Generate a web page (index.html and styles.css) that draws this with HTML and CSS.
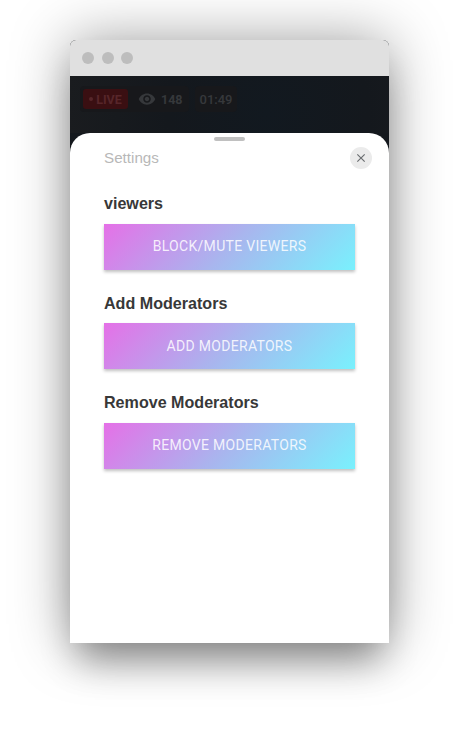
FILE: index.html
```html
<!DOCTYPE html>
<html lang="en">
<head>
<meta charset="utf-8">
<title>Settings</title>
<link rel="stylesheet" href="styles.css">
</head>
<body>
<div class="phone">
  <div class="chrome">
    <span class="dot"></span><span class="dot"></span><span class="dot"></span>
  </div>
  <div class="stage">
    <div class="hud">
      <div class="pill">
        <span class="live"><span class="live-dot"></span>LIVE</span>
        <svg class="eye" viewBox="0 0 24 24" width="18" height="18"><path fill="#36383b" d="M12 4.5C7 4.5 2.73 7.61 1 12c1.73 4.39 6 7.5 11 7.5s9.27-3.11 11-7.5c-1.73-4.39-6-7.5-11-7.5zM12 17c-2.76 0-5-2.24-5-5s2.24-5 5-5 5 2.24 5 5-2.24 5-5 5zm0-8c-1.66 0-3 1.34-3 3s1.34 3 3 3 3-1.34 3-3-1.34-3-3-3z"/></svg>
        <span class="count">148</span>
      </div>
      <div class="pill time">01:49</div>
    </div>
  </div>
  <div class="sheet">
    <span class="handle"></span>
    <header class="sheet-head">
      <span class="sheet-title">Settings</span>
      <button class="close" aria-label="Close">
        <svg viewBox="0 0 24 24" width="14" height="14"><path fill="#6a6d70" d="M19 6.41 17.59 5 12 10.59 6.41 5 5 6.41 10.59 12 5 17.59 6.41 19 12 13.41 17.59 19 19 17.59 13.41 12z"/></svg>
      </button>
    </header>
    <section class="group">
      <h2>viewers</h2>
      <button class="grad">BLOCK/MUTE VIEWERS</button>
    </section>
    <section class="group">
      <h2>Add Moderators</h2>
      <button class="grad">ADD MODERATORS</button>
    </section>
    <section class="group">
      <h2>Remove Moderators</h2>
      <button class="grad">REMOVE MODERATORS</button>
    </section>
  </div>
</div>
</body>
</html>
```
FILE: styles.css
```css
* { box-sizing: border-box; }
html, body { margin: 0; height: 100%; }
body {
  background: #fff;
  font-family: "Liberation Sans", Arial, sans-serif;
  padding: 40px 70px 0 70px;
  overflow: hidden;
}
.phone {
  width: 318.5px;
  height: 603px;
  position: relative;
  border-radius: 6px 6px 0 0;
  box-shadow: 0 0 58px rgba(0,0,0,.38), 0 26px 34px -8px rgba(0,0,0,.32);
  display: flex;
  flex-direction: column;
  background: #14181d;
}
.chrome {
  height: 36px;
  background: #e0e0e0;
  border-radius: 6px 6px 0 0;
  display: flex;
  align-items: center;
  gap: 7.5px;
  padding-left: 12px;
  flex: none;
}
.dot { width: 12px; height: 12px; border-radius: 50%; background: #bdbdbd; }
.stage {
  height: 57px;
  flex: none;
  background: radial-gradient(circle at 62% 65%, #121920 0%, #14181d 50%, #1a1c1f 100%);
  padding: 10px;
}
.hud { display: flex; gap: 6px; }
.pill {
  height: 26px;
  width: 109px;
  border-radius: 4px;
  background: #17181b;
  display: flex;
  align-items: center;
  padding: 0 3px;
  font-family: Roboto, sans-serif;
  font-size: 12.5px;
  font-weight: 700;
  color: #36383b;
}
.live {
  height: 20px;
  width: 45px;
  background: #3a0f12;
  color: #57262a;
  border-radius: 3px;
  display: flex;
  align-items: center;
  justify-content: center;
  gap: 3px;
}
.live-dot { width: 4px; height: 4px; border-radius: 50%; background: #57262a; }
.eye { margin-left: 10px; }
.count { margin-left: 5px; }
.pill.time { width: 42px; padding: 0; justify-content: center; font-weight: 500; font-size: 13px; }
.sheet {
  flex: 1;
  background: #fff;
  border-radius: 20px 20px 0 0;
  position: relative;
  padding: 0 33.5px 0 34px;
}
.handle {
  position: absolute;
  top: 4px;
  left: 144px;
  width: 31px;
  height: 4px;
  border-radius: 2px;
  background: #c0c0c0;
}
.sheet-head {
  display: flex;
  justify-content: space-between;
  align-items: center;
  height: 50px;
  margin-right: -17px;
}
.sheet-title { font-size: 15.2px; color: #b8b8b8; padding-bottom: 2px; }
.close {
  width: 22px;
  height: 22px;
  border: 0;
  padding: 0;
  border-radius: 50%;
  background: #ebebeb;
  display: flex;
  align-items: center;
  justify-content: center;
}
.group { margin-bottom: 22.5px; }
.group h2 {
  margin: 0;
  font-size: 16.1px;
  line-height: 18px;
  font-weight: bold;
  color: #383838;
  height: 31px;
  padding-top: 1.4px;
}
.sheet-head + .group { margin-top: 9.8px; }
.grad {
  display: block;
  width: 251px;
  height: 46px;
  border: 0;
  padding: 0 0 1px;
  font-family: Roboto, sans-serif;
  font-size: 14px;
  letter-spacing: .3px;
  color: rgba(255,255,255,.85);
  background: linear-gradient(135deg, #e570e7 0%, #a9b5ee 50%, #79f1fd 100%);
  box-shadow: 0 2px 3px rgba(0,0,0,.25);
}
```
